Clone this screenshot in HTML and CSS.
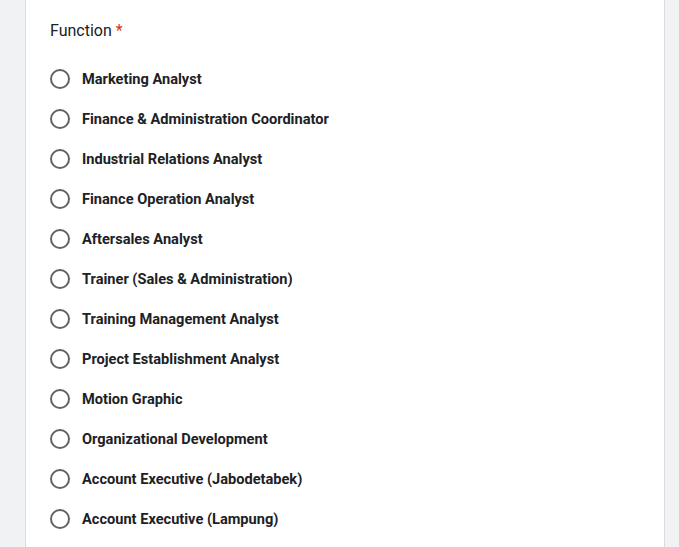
FILE: index.html
```html
<!DOCTYPE html>
<html>
<head>
<meta charset="utf-8">
<link rel="stylesheet" href="styles.css">
</head>
<body>
<div class="card">
  <div class="title">Function <span class="req">*</span></div>
  <div class="options">
    <div class="opt"><span class="radio"></span><span class="label">Marketing Analyst</span></div>
    <div class="opt"><span class="radio"></span><span class="label">Finance &amp; Administration Coordinator</span></div>
    <div class="opt"><span class="radio"></span><span class="label">Industrial Relations Analyst</span></div>
    <div class="opt"><span class="radio"></span><span class="label">Finance Operation Analyst</span></div>
    <div class="opt"><span class="radio"></span><span class="label">Aftersales Analyst</span></div>
    <div class="opt"><span class="radio"></span><span class="label">Trainer (Sales &amp; Administration)</span></div>
    <div class="opt"><span class="radio"></span><span class="label">Training Management Analyst</span></div>
    <div class="opt"><span class="radio"></span><span class="label">Project Establishment Analyst</span></div>
    <div class="opt"><span class="radio"></span><span class="label">Motion Graphic</span></div>
    <div class="opt"><span class="radio"></span><span class="label">Organizational Development</span></div>
    <div class="opt"><span class="radio"></span><span class="label">Account Executive (Jabodetabek)</span></div>
    <div class="opt"><span class="radio"></span><span class="label">Account Executive (Lampung)</span></div>
  </div>
</div>
</body>
</html>
```
FILE: styles.css
```css
html, body {
  margin: 0;
  padding: 0;
  background: #f0f2f3;
  height: 100%;
  overflow: hidden;
}
body {
  font-family: Roboto, "Liberation Sans", Arial, sans-serif;
  color: #202124;
}
.card {
  margin-left: 25px;
  width: 640px;
  height: 560px;
  background: #fff;
  border-left: 1px solid #dadce0;
  border-right: 1px solid #dadce0;
  box-sizing: border-box;
  padding: 21px 24px 0 24px;
}
.title {
  font-size: 16px;
  line-height: 20px;
}
.req {
  color: #d93025;
}
.options {
  margin-top: 18px;
  display: flex;
  flex-direction: column;
}
.opt {
  display: flex;
  align-items: center;
  height: 40px;
}
.radio {
  width: 20px;
  height: 20px;
  border: 2px solid #5f6368;
  border-radius: 50%;
  box-sizing: border-box;
  flex: none;
}
.label {
  margin-left: 12px;
  font-size: 14.6px;
  font-weight: 700;
  color: #202124;
}
```
